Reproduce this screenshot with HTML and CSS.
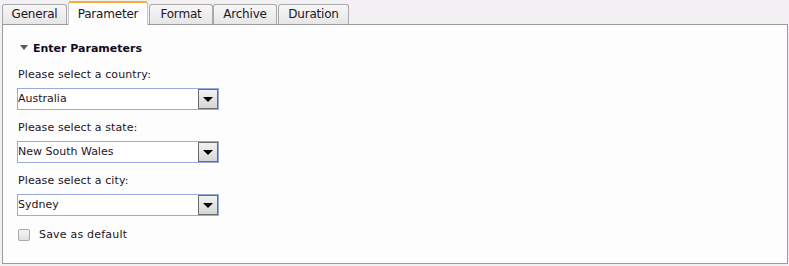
FILE: index.html
```html
<!DOCTYPE html>
<html>
<head>
<meta charset="utf-8">
<link rel="stylesheet" href="styles.css">
</head>
<body>
<div class="tabs">
  <div class="tab">General</div>
  <div class="tab active">Parameter</div>
  <div class="tab">Format</div>
  <div class="tab">Archive</div>
  <div class="tab">Duration</div>
</div>
<div class="panel">
  <div class="heading"><span class="caret"></span>Enter Parameters</div>
  <div class="field">
    <div class="label">Please select a country:</div>
    <div class="select"><span class="value">Australia</span><span class="btn"><span class="arrow"></span></span></div>
  </div>
  <div class="field">
    <div class="label">Please select a state:</div>
    <div class="select"><span class="value">New South Wales</span><span class="btn"><span class="arrow"></span></span></div>
  </div>
  <div class="field">
    <div class="label">Please select a city:</div>
    <div class="select"><span class="value">Sydney</span><span class="btn"><span class="arrow"></span></span></div>
  </div>
  <label class="check"><span class="box"></span>Save as default</label>
</div>
</body>
</html>
```
FILE: styles.css
```css
html, body {
  margin: 0;
  padding: 0;
  background: #f3f0f3;
  font-family: "DejaVu Sans", Verdana, sans-serif;
  font-size: 11px;
  color: #1e1424;
}
.tabs {
  display: flex;
  align-items: flex-end;
  height: 24px;
  padding-left: 2px;
  gap: 1px;
}
.tab {
  box-sizing: border-box;
  height: 20px;
  padding: 0 6px;
  line-height: 19px;
  border: 1px solid #a9a9a9;
  border-bottom: none;
  border-radius: 3px 3px 0 0;
  background: linear-gradient(#f7f7f7, #e6e6e6);
  font-size: 12px;
  letter-spacing: -0.2px;
  text-align: center;
}
.tab:nth-child(1) { width: 65px; }
.tab:nth-child(2) { width: 80px; }
.tab:nth-child(3) { width: 64px; }
.tab:nth-child(4) { width: 64px; margin-left: -1px; }
.tab:nth-child(5) { width: 71px; }
.tab.active {
  height: 24px;
  margin-bottom: -1px;
  position: relative;
  z-index: 1;
  background: #fdfdfd;
  border-color: #c8c8c8;
  border-top: 2px solid #f4ad3d;
  line-height: 23px;
}
.panel {
  box-sizing: border-box;
  height: 240px;
  margin: 0 1px 0 2px;
  border: 1px solid #9c9c9c;
  background: #fcfdfc;
  padding: 17px 0 0 14px;
}
.heading {
  font-weight: bold;
  line-height: 14px;
  height: 14px;
  display: flex;
  align-items: center;
  margin-left: 3px;
  color: #140a1e;
}
.caret {
  width: 0;
  height: 0;
  border-left: 4px solid transparent;
  border-right: 4px solid transparent;
  border-top: 5px solid #5a5a5a;
  margin-right: 5px;
  margin-top: -3px;
}
.field { margin-top: 12px; }
.field + .field { margin-top: 11px; }
.label {
  line-height: 14px;
  margin-left: 1px;
  letter-spacing: 0.1px;
}
.select {
  box-sizing: border-box;
  margin-top: 6px;
  width: 202px;
  height: 22px;
  border: 1px solid #98acdc;
  background: #fff;
  display: flex;
  align-items: center;
}
.value {
  flex: 1;
  padding-left: 0;
  line-height: 20px;
}
.btn {
  box-sizing: border-box;
  width: 20px;
  height: 20px;
  border: 1px solid #6b6b6b;
  background: linear-gradient(#f2f2f2, #d6d6d6);
  display: flex;
  align-items: center;
  justify-content: center;
}
.arrow {
  width: 0;
  height: 0;
  border-left: 5px solid transparent;
  border-right: 5px solid transparent;
  border-top: 5px solid #000;
  margin-top: 1px;
}
.check {
  display: flex;
  align-items: center;
  margin-top: 12px;
  line-height: 14px;
  margin-left: 1px;
  letter-spacing: 0.2px;
}
.box {
  box-sizing: border-box;
  width: 12px;
  height: 12px;
  border: 1px solid #a8a8a8;
  border-radius: 2px;
  background: linear-gradient(#f4f4f4, #e2e2e2);
  margin-right: 9px;
}
```
